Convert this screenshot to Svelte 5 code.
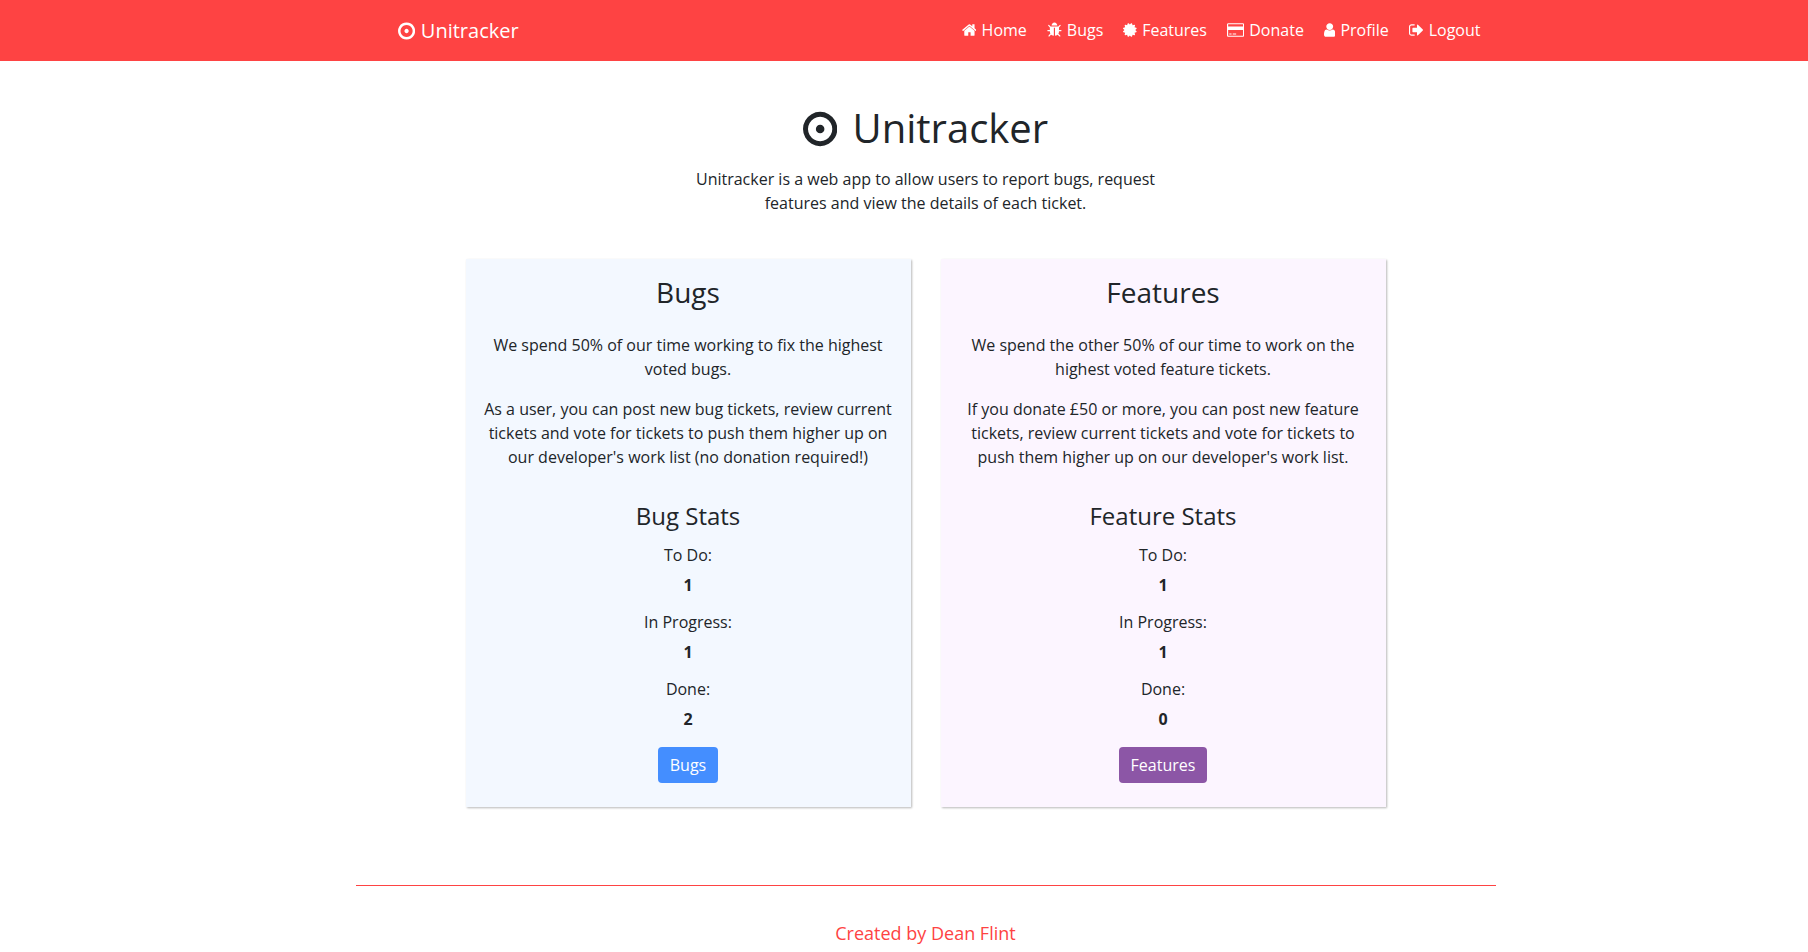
<script>
  const icons = {
    dot: {
      box: '128 0 1536 1792',
      path: 'M1088 896q0 80-56 136t-136 56-136-56-56-136 56-136 136-56 136 56 56 136zm-192-544q-148 0-273 73t-198 198-73 273 73 273 198 198 273 73 273-73 198-198 73-273-73-273-198-198-273-73zm768 544q0 209-103 385.5t-279.5 279.5-385.5 103-385.5-103-279.5-279.5-103-385.5 103-385.5 279.5-279.5 385.5-103 385.5 103 279.5 279.5 103 385.5z'
    },
    home: {
      box: '64 0 1664 1792',
      path: 'M1472 992v480q0 26-19 45t-45 19h-384v-384h-256v384h-384q-26 0-45-19t-19-45v-480q0-1 .5-3t.5-3l575-474 575 474q1 2 1 6zm223-69l-62 74q-8 9-21 11h-3q-13 0-21-7l-692-577-692 577q-12 8-24 7-13-2-21-11l-62-74q-8-10-7-23.5t11-21.5l719-599q32-26 76-26t76 26l244 204v-195q0-14 9-23t23-9h192q14 0 23 9t9 23v408l219 182q10 8 11 21.5t-7 23.5z'
    },
    bug: {
      box: '64 0 1664 1792',
      path: 'M1696 960q0 26-19 45t-45 19h-224q0 171-67 290l208 209q19 19 19 45t-19 45q-18 19-45 19t-45-19l-198-197q-5 5-15 13t-42 28.5-65 36.5-82 29-97 13v-896h-128v896q-51 0-101.5-13.5t-87-33-66-39-43.5-32.5l-15-14-183 207q-20 21-48 21-24 0-43-16-19-18-20.5-44.5t15.5-46.5l202-227q-58-114-58-274h-224q-26 0-45-19t-19-45 19-45 45-19h224v-294l-173-173q-19-19-19-45t19-45 45-19 45 19l173 173h844l173-173q19-19 45-19t45 19 19 45-19 45l-173 173v294h224q26 0 45 19t19 45zm-480-576h-640q0-133 93.5-226.5t226.5-93.5 226.5 93.5 93.5 226.5z'
    },
    certificate: {
      box: '128 0 1536 1792',
      path: 'M1504 896l138 135q30 28 20 70-12 41-52 51l-188 48 53 186q12 41-19 70-29 31-70 19l-186-53-48 188q-10 40-51 52-12 2-19 2-31 0-51-22l-135-138-135 138q-28 30-70 20-41-11-51-52l-48-188-186 53q-41 12-70-19-31-29-19-70l53-186-188-48q-40-10-52-51-10-42 20-70l138-135-138-135q-30-28-20-70 12-41 52-51l188-48-53-186q-12-41 19-70 29-31 70-19l186 53 48-188q10-41 51-51 41-12 70 19l135 139 135-139q29-30 70-19 41 10 51 51l48 188 186-53q41-12 70 19 31 29 19 70l-53 186 188 48q40 10 52 51 10 42-20 70z'
    },
    card: {
      box: '0 0 1920 1792',
      path: 'M1760 128q66 0 113 47t47 113v1216q0 66-47 113t-113 47h-1600q-66 0-113-47t-47-113v-1216q0-66 47-113t113-47h1600zM160 256q-13 0-22.5 9.5t-9.5 22.5v224h1664v-224q0-13-9.5-22.5t-22.5-9.5h-1600zM1760 1536q13 0 22.5-9.5t9.5-22.5v-608h-1664v608q0 13 9.5 22.5t22.5 9.5h1600zM256 1408v-128h256v128h-256zM640 1408v-128h384v128h-384z'
    },
    user: {
      box: '256 0 1280 1792',
      path: 'M1536 1399q0 109-62.5 187t-150.5 78h-854q-88 0-150.5-78t-62.5-187q0-85 8.5-160.5t31.5-152 58.5-131 94-89 134.5-34.5q131 128 313 128t313-128q76 0 134.5 34.5t94 89 58.5 131 31.5 152 8.5 160.5zm-256-887q0 159-112.5 271.5t-271.5 112.5-271.5-112.5-112.5-271.5 112.5-271.5 271.5-112.5 271.5 112.5 112.5 271.5z'
    },
    signout: {
      box: '64 0 1664 1792',
      path: 'M704 1440q0 4 1 20t.5 26.5-3 23.5-10 19.5-20.5 6.5h-320q-119 0-203.5-84.5t-84.5-203.5v-704q0-119 84.5-203.5t203.5-84.5h320q13 0 22.5 9.5t9.5 22.5q0 4 1 20t.5 26.5-3 23.5-10 19.5-20.5 6.5h-320q-66 0-113 47t-47 113v704q0 66 47 113t113 47h312l11.5 1 11.5 3 8 5.5 7 9 2 13.5zm928-544q0 26-19 45l-544 544q-19 19-45 19t-45-19-19-45v-288h-448q-26 0-45-19t-19-45v-384q0-26 19-45t45-19h448v-288q0-26 19-45t45-19 45 19l544 544q19 19 19 45z'
    }
  };

  const links = [
    { label: 'Home', icon: 'home' },
    { label: 'Bugs', icon: 'bug' },
    { label: 'Features', icon: 'certificate' },
    { label: 'Donate', icon: 'card' },
    { label: 'Profile', icon: 'user' },
    { label: 'Logout', icon: 'signout' }
  ];

  const panels = [
    {
      kind: 'bugs',
      title: 'Bugs',
      text: [
        'We spend 50% of our time working to fix the highest voted bugs.',
        "As a user, you can post new bug tickets, review current tickets and vote for tickets to push them higher up on our developer's work list (no donation required!)"
      ],
      heading: 'Bug Stats',
      stats: [['To Do:', 1], ['In Progress:', 1], ['Done:', 2]]
    },
    {
      kind: 'features',
      title: 'Features',
      text: [
        'We spend the other 50% of our time to work on the highest voted feature tickets.',
        "If you donate £50 or more, you can post new feature tickets, review current tickets and vote for tickets to push them higher up on our developer's work list."
      ],
      heading: 'Feature Stats',
      stats: [['To Do:', 1], ['In Progress:', 1], ['Done:', 0]]
    }
  ];
</script>

{#snippet icon(name)}
  <svg class="icon" viewBox={icons[name].box} aria-hidden="true"><path fill-rule="evenodd" d={icons[name].path} /></svg>
{/snippet}

<header>
  <nav class="container">
    <a class="brand" href="#home">{@render icon('dot')} Unitracker</a>
    <ul>
      {#each links as link}
        <li><a href="#{link.label.toLowerCase()}">{@render icon(link.icon)} {link.label}</a></li>
      {/each}
    </ul>
  </nav>
</header>

<main>
  <section class="hero">
    <h1>{@render icon('dot')} Unitracker</h1>
    <p>Unitracker is a web app to allow users to report bugs, request features and view the details of each ticket.</p>
  </section>

  <div class="panels">
    {#each panels as panel}
      <section class="panel {panel.kind}">
        <h2>{panel.title}</h2>
        {#each panel.text as paragraph}
          <p>{paragraph}</p>
        {/each}
        <h3>{panel.heading}</h3>
        <dl>
          {#each panel.stats as [label, value]}
            <dt>{label}</dt>
            <dd>{value}</dd>
          {/each}
        </dl>
        <a class="button" href="#{panel.kind}">{panel.title}</a>
      </section>
    {/each}
  </div>
</main>

<footer>
  <div class="container">
    <p>Created by Dean Flint</p>
  </div>
</footer>

<style>
  :global(body) {
    margin: 0;
    background: #fff;
    color: #212529;
    font: 16px/24px "Open Sans", sans-serif;
  }

  header,
  main,
  footer {
    padding-left: 43px;
  }

  h1,
  h2,
  h3,
  p,
  ul,
  dl,
  dd {
    margin: 0;
    padding: 0;
    font-weight: 400;
  }

  a {
    color: inherit;
    text-decoration: none;
  }

  .icon {
    height: 1em;
    margin-right: 1px;
    fill: currentColor;
    vertical-align: -2px;
  }

  .container {
    box-sizing: border-box;
    max-width: 1140px;
    margin: 0 auto;
  }

  header {
    background: #fe4343;
    color: #fff;
  }

  nav {
    display: flex;
    flex-wrap: wrap;
    align-items: center;
    justify-content: space-between;
    padding: 14px 15px 15px 42px;
  }

  .brand {
    padding-top: 2px;
    font-size: 20px;
    line-height: 30px;
  }

  .brand .icon {
    vertical-align: -3px;
  }

  ul {
    display: flex;
    flex-wrap: wrap;
    gap: 20px;
    list-style: none;
  }

  .hero {
    max-width: 475px;
    margin: 0 auto;
    padding: 43px 0 44px;
    text-align: center;
  }

  h1 {
    margin-bottom: 15px;
    font-size: 40px;
    line-height: 48px;
  }

  h1 .icon {
    margin-right: 5px;
    vertical-align: -6px;
  }

  .panels {
    display: grid;
    grid-template-columns: repeat(auto-fit, minmax(320px, 1fr));
    gap: 30px;
    max-width: 920px;
    margin: 0 auto;
  }

  .panel {
    padding: 16px 16px 24px;
    box-shadow: 1px 1px 2px rgba(0, 0, 0, 0.28);
    text-align: center;
  }

  .bugs {
    --accent: #448eff;
    background: #f3f8ff;
  }

  .features {
    --accent: #8c56a6;
    background: #fcf5ff;
  }

  h2 {
    margin-bottom: 24px;
    font-size: 28px;
    line-height: 34px;
  }

  .panel p {
    margin-bottom: 16px;
  }

  h3 {
    margin: 32px 0 16px;
    font-size: 24px;
    line-height: 29px;
  }

  dt {
    margin-bottom: 8px;
    line-height: 19px;
  }

  dd {
    margin-bottom: 16px;
    font-weight: 700;
  }

  .button {
    display: inline-block;
    padding: 6px 12px;
    border-radius: 4px;
    background: var(--accent);
    color: #fff;
    vertical-align: top;
  }

  footer {
    margin-top: 78px;
    color: #fe4343;
    font-size: 18px;
    line-height: 27px;
    text-align: center;
  }

  footer .container {
    padding-top: 34px;
    border-top: 1px solid;
  }
</style>
